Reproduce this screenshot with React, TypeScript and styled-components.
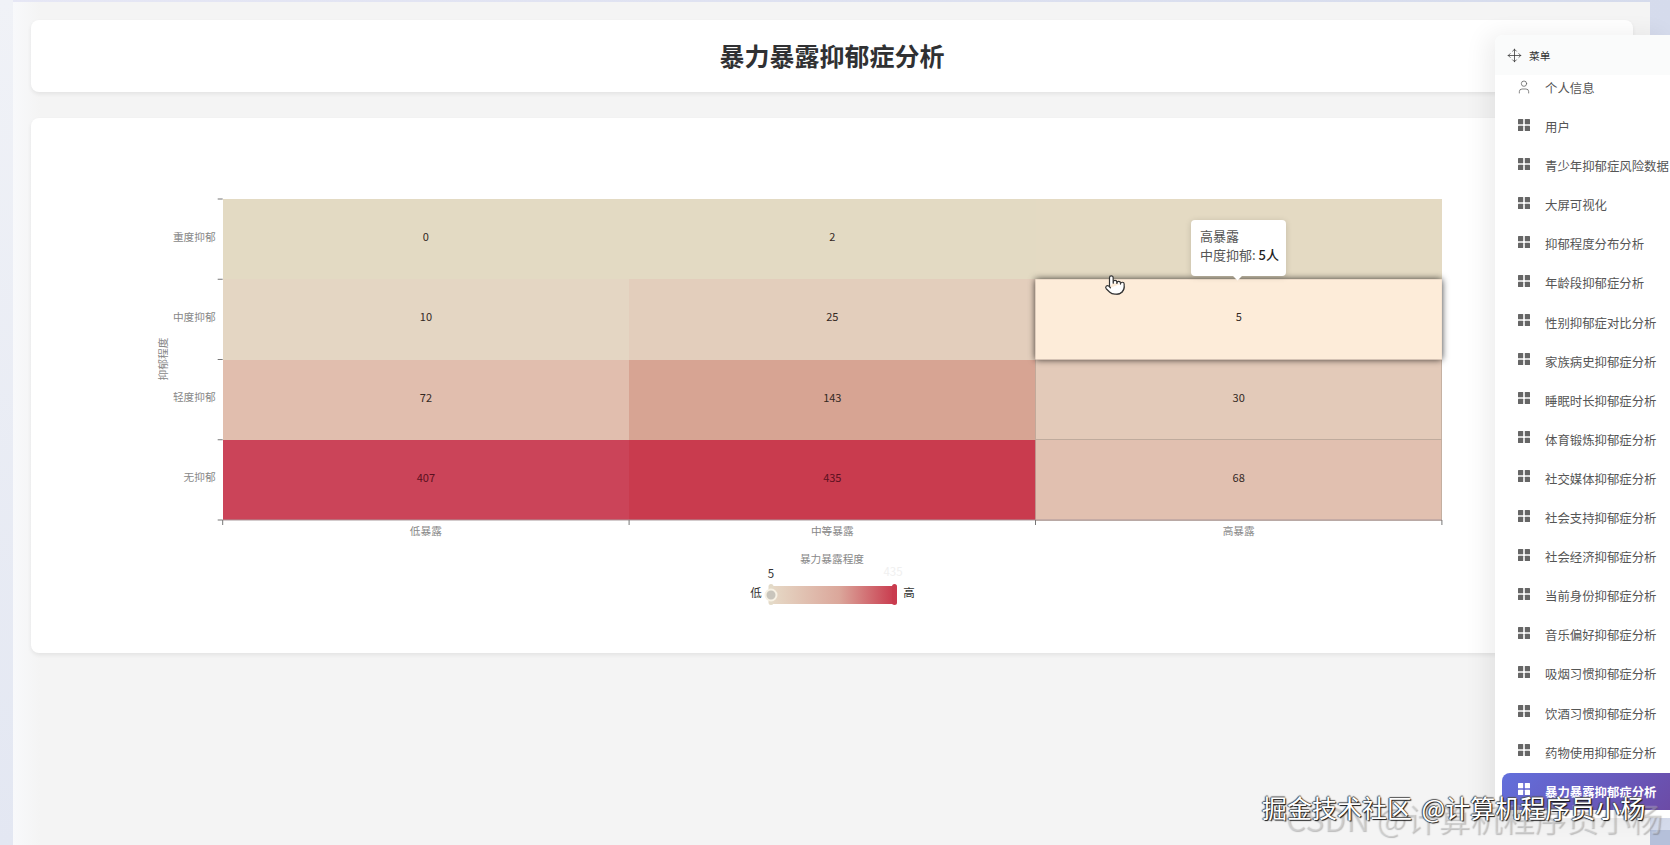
import styled, { createGlobalStyle } from "styled-components";
import { Move, Pointer, User } from "lucide-react";

const FONT = `"Noto Sans CJK SC", "Noto Sans", sans-serif`;

const GlobalStyle = createGlobalStyle`
  html, body {
    margin: 0;
    padding: 0;
    overflow: hidden;
    font-family: ${FONT};
  }
`;

const Page = styled.div`
  position: relative;
  width: 1670px;
  height: 845px;
  box-sizing: border-box;
  padding: 2px 20px 0 13px;
  overflow: hidden;
  background: linear-gradient(#b5c0da, #b5c0da) right bottom / 20px 15px no-repeat,
    linear-gradient(180deg, #f0f2f7, #e3e7f2) left top / 13px 100% no-repeat,
    linear-gradient(90deg, #e6e7f5, #d5dbec);
`;

const Main = styled.main`
  height: 843px;
  box-sizing: border-box;
  padding: 18px 17px 0 18px;
  background: linear-gradient(90deg, #f8f9fb, #f4f4f4 27px);
`;

const Card = styled.section`
  background: #fff;
  border-radius: 8px;
  box-shadow: 0 2px 4px rgba(0, 0, 0, 0.07);
`;

const TitleCard = styled(Card)`
  height: 72px;
  box-sizing: border-box;
  padding-bottom: 2px;
  display: flex;
  align-items: center;
  justify-content: center;
  margin-bottom: 26px;
`;

const Title = styled.h1`
  margin: 0;
  font-size: 25px;
  font-weight: 700;
  color: #303133;
`;

const ChartCard = styled(Card)`
  position: relative;
  height: 535px;
`;

const ChartSvg = styled.svg`
  display: block;
  width: 100%;
  height: 100%;
`;

const CellRect = styled.rect`
  shape-rendering: crispEdges;
`;

const AxisText = styled.text`
  font-size: 10.7px;
  fill: #888;
`;

const CellValue = styled.text<{ $deep?: boolean }>`
  font-size: 11px;
  fill: ${(p) => (p.$deep ? "#5a1020" : "#33281f")};
  text-anchor: middle;
  dominant-baseline: central;
`;

const LegendText = styled.text<{ $faint?: boolean }>`
  font-size: 11.5px;
  fill: ${(p) => (p.$faint ? "#f0f0f0" : "#333")};
  text-anchor: middle;
  dominant-baseline: central;
`;

const Tooltip = styled.div`
  position: absolute;
  left: 1160px;
  top: 102px;
  width: 95px;
  height: 56px;
  box-sizing: border-box;
  padding: 7px 0 0 9px;
  background: #fff;
  border-radius: 4px;
  box-shadow: 0 1px 6px rgba(0, 0, 0, 0.15);
  font-size: 13px;
  line-height: 18.7px;
  color: #555;
  white-space: nowrap;

  &::after {
    content: "";
    position: absolute;
    left: 43px;
    bottom: -3px;
    width: 7px;
    height: 7px;
    background: #fff;
    transform: rotate(45deg);
  }
`;

const TooltipValue = styled.b`
  font-weight: 500;
  color: #222;
`;

const Cursor = styled.div`
  position: absolute;
  left: 1073px;
  top: 156px;
  line-height: 0;
  color: #333;
`;

const Menu = styled.aside`
  position: absolute;
  top: 35px;
  left: 1495px;
  right: 0;
  height: 783px;
  display: flex;
  flex-direction: column;
  background: #fff;
  border-top-left-radius: 8px;
  box-shadow: -8px 0 24px rgba(0, 0, 0, 0.07);
  overflow: hidden;
`;

const MenuHeader = styled.header`
  position: relative;
  flex: none;
  height: 40px;
  display: flex;
  align-items: center;
  gap: 7px;
  padding-left: 12px;
  background: #fafbfb;
  font-size: 10.7px;
  color: #333;
`;

const MenuList = styled.ul`
  flex: 1;
  list-style: none;
  margin: -5.5px 0 0;
  padding: 0;
  display: flex;
  flex-direction: column;
  gap: 2.1px;
`;

const MenuItem = styled.li<{ $active?: boolean }>`
  flex: none;
  height: 37px;
  margin-left: 7px;
  display: flex;
  align-items: center;
  padding-left: 16px;
  border-radius: 8px 0 0 8px;
  font-size: 12.4px;
  white-space: nowrap;
  font-weight: ${(p) => (p.$active ? 700 : 400)};
  color: ${(p) => (p.$active ? "#fff" : "#555")};
  background: ${(p) =>
    p.$active ? "linear-gradient(135deg, #626fdc, #6c4ba6)" : "transparent"};
`;

const MenuIcon = styled.span`
  flex: none;
  width: 12px;
  height: 12px;
  margin: 0 15px 5px 0;
  line-height: 0;
`;

const PersonIcon = styled(MenuIcon)`
  height: 16px;
  margin-bottom: 2px;
  color: #666;

  svg {
    margin-left: -2px;
  }
`;

const Watermark = styled.div`
  position: absolute;
  left: 1262px;
  top: 789px;
  font-size: 25px;
  line-height: 36px;
  word-spacing: 4px;
  white-space: nowrap;
  color: #fff;
  text-shadow: 1px 1px 1px #111, -1px 0 1px #444, 0 -1px 1px #555;
`;

const GhostMark = styled.div`
  position: absolute;
  left: 1285px;
  top: 793px;
  font-size: 32px;
  line-height: 48px;
  white-space: nowrap;
  color: rgba(255, 255, 255, 0.22);
  text-shadow: 1px 1px 1px rgba(90, 90, 90, 0.35);
`;

const PLOT_LEFT = 191.7;
const PLOT_TOP = 81;
const CELL_W = 406.4;
const CELL_H = 80.25;

const xLabels = ["低暴露", "中等暴露", "高暴露"];
const yLabels = ["重度抑郁", "中度抑郁", "轻度抑郁", "无抑郁"];

const cells = [
  [{ v: 0, c: "#e3dac3" }, { v: 2, c: "#e3dac3" }, { v: null, c: "#e4dac3" }],
  [{ v: 10, c: "#e4d6c3" }, { v: 25, c: "#e3cebc" }, { v: null, c: "#e3c9b7" }],
  [{ v: 72, c: "#e1beae" }, { v: 143, c: "#d7a493" }, { v: 30, c: "#e3cab9" }],
  [{ v: 407, c: "#cb4459" }, { v: 435, c: "#c93b4e" }, { v: 68, c: "#e1c0b0" }],
];

const menuItems = [
  "用户",
  "青少年抑郁症风险数据",
  "大屏可视化",
  "抑郁程度分布分析",
  "年龄段抑郁症分析",
  "性别抑郁症对比分析",
  "家族病史抑郁症分析",
  "睡眠时长抑郁症分析",
  "体育锻炼抑郁症分析",
  "社交媒体抑郁症分析",
  "社会支持抑郁症分析",
  "社会经济抑郁症分析",
  "当前身份抑郁症分析",
  "音乐偏好抑郁症分析",
  "吸烟习惯抑郁症分析",
  "饮酒习惯抑郁症分析",
  "药物使用抑郁症分析",
];

const GridIcon = ({ color }: { color: string }) => (
  <svg width="12" height="12" viewBox="0 0 12 12" fill={color}>
    <rect x="0" y="0" width="5.2" height="5.2" rx="0.5" />
    <rect x="6.8" y="0" width="5.2" height="5.2" rx="0.5" />
    <rect x="0" y="6.8" width="5.2" height="5.2" rx="0.5" />
    <rect x="6.8" y="6.8" width="5.2" height="5.2" rx="0.5" />
  </svg>
);

const HeatmapChart = () => {
  const bottom = PLOT_TOP + CELL_H * 4;
  const right = PLOT_LEFT + CELL_W * 3;

  return (
    <ChartSvg viewBox="0 0 1602 535">
      <defs>
        <linearGradient id="legendTrack">
          <stop offset="0" stopColor="#e6d9c6" />
          <stop offset="0.55" stopColor="#dba79b" />
          <stop offset="1" stopColor="#c93b4e" />
        </linearGradient>
        <filter id="cellShadow" x="-5%" y="-25%" width="110%" height="150%">
          <feDropShadow dx="0" dy="0" stdDeviation="3.5" floodColor="#000" floodOpacity="0.8" />
        </filter>
      </defs>

      {cells.map((row, r) =>
        row.map((cell, c) => (
          <CellRect
            key={`${r}-${c}`}
            x={PLOT_LEFT + CELL_W * c}
            y={PLOT_TOP + CELL_H * r}
            width={CELL_W}
            height={CELL_H}
            fill={cell.c}
            stroke={c === 2 && r > 1 ? "#bdaa9c" : "none"}
            strokeWidth="0.8"
          />
        ))
      )}

      {/* hovered cell */}
      <rect
        x={PLOT_LEFT + CELL_W * 2}
        y={PLOT_TOP + CELL_H}
        width={CELL_W}
        height={CELL_H}
        fill="#fdecd9"
        filter="url(#cellShadow)"
      />

      {cells.map((row, r) =>
        row.map((cell, c) =>
          cell.v === null ? null : (
            <CellValue
              key={`v-${r}-${c}`}
              $deep={r === 3 && c < 2}
              x={PLOT_LEFT + CELL_W * (c + 0.5)}
              y={PLOT_TOP + CELL_H * (r + 0.5) - 3}
            >
              {cell.v}
            </CellValue>
          )
        )
      )}
      <CellValue x={PLOT_LEFT + CELL_W * 2.5} y={PLOT_TOP + CELL_H * 1.5 - 3}>
        5
      </CellValue>

      {/* axes */}
      <line x1={PLOT_LEFT} y1={bottom} x2={right} y2={bottom} stroke="#a8979a" />
      {[0, 1, 2, 3, 4].map((i) => (
        <line
          key={`yt-${i}`}
          x1={PLOT_LEFT - 5}
          x2={PLOT_LEFT}
          y1={PLOT_TOP + CELL_H * i}
          y2={PLOT_TOP + CELL_H * i}
          stroke="#777"
        />
      ))}
      {[0, 1, 2, 3].map((i) => (
        <line
          key={`xt-${i}`}
          x1={PLOT_LEFT + CELL_W * i}
          x2={PLOT_LEFT + CELL_W * i}
          y1={bottom}
          y2={bottom + 5}
          stroke="#777"
        />
      ))}
      {yLabels.map((label, i) => (
        <AxisText
          key={label}
          x={PLOT_LEFT - 7}
          y={PLOT_TOP + CELL_H * (i + 0.5) - 3}
          textAnchor="end"
          dominantBaseline="central"
        >
          {label}
        </AxisText>
      ))}
      {xLabels.map((label, i) => (
        <AxisText
          key={label}
          x={PLOT_LEFT + CELL_W * (i + 0.5)}
          y={412}
          textAnchor="middle"
          dominantBaseline="central"
        >
          {label}
        </AxisText>
      ))}
      <AxisText
        transform="translate(131 241) rotate(-90)"
        textAnchor="middle"
        dominantBaseline="central"
      >
        抑郁程度
      </AxisText>
      <AxisText x={801} y={440} textAnchor="middle" dominantBaseline="central">
        暴力暴露程度
      </AxisText>

      {/* visual map */}
      <LegendText x={725} y={474}>低</LegendText>
      <LegendText x={878} y={474}>高</LegendText>
      <LegendText x={740} y={455}>5</LegendText>
      <LegendText $faint x={862} y={453}>435</LegendText>
      <rect x={740.5} y={468} width={123} height={18} fill="url(#legendTrack)" />
      <rect x={737.5} y={466} width={5} height={21} rx={2.5} fill="#e3dac8" />
      <rect x={861} y={466} width={5} height={21} rx={2.5} fill="#c93b4e" />
      <circle cx={740} cy={477} r={5.5} fill="#c9c5bc" stroke="#f7f1e4" strokeWidth={2} />
    </ChartSvg>
  );
};

const App = () => {
  return (
    <Page>
      <GlobalStyle />
      <Main>
        <TitleCard>
          <Title>暴力暴露抑郁症分析</Title>
        </TitleCard>
        <ChartCard>
          <HeatmapChart />
          <Tooltip>
            高暴露
            <br />
            中度抑郁: <TooltipValue>5人</TooltipValue>
          </Tooltip>
          <Cursor>
            <Pointer size={22} fill="#fff" strokeWidth={1.3} />
          </Cursor>
        </ChartCard>
      </Main>

      <Menu>
        <MenuHeader>
          <Move size={15} strokeWidth={1.2} />
          菜单
        </MenuHeader>
        <MenuList>
          <MenuItem>
            <PersonIcon>
              <User size={16} strokeWidth={1.2} />
            </PersonIcon>
            个人信息
          </MenuItem>
          {menuItems.map((item) => (
            <MenuItem key={item}>
              <MenuIcon>
                <GridIcon color="#666" />
              </MenuIcon>
              {item}
            </MenuItem>
          ))}
          <MenuItem $active>
            <MenuIcon>
              <GridIcon color="#fff" />
            </MenuIcon>
            暴力暴露抑郁症分析
          </MenuItem>
        </MenuList>
      </Menu>

      <GhostMark>CSDN @计算机程序员小杨</GhostMark>
      <Watermark>掘金技术社区 @计算机程序员小杨</Watermark>
    </Page>
  );
};

export default App;
